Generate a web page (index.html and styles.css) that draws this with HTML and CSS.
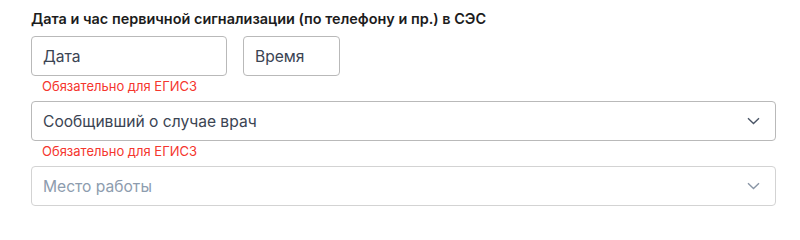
FILE: index.html
```html
<!DOCTYPE html>
<html lang="ru">
<head>
<meta charset="utf-8">
<link rel="stylesheet" href="styles.css">
</head>
<body>
<div class="form">
  <div class="title">Дата и час первичной сигнализации (по телефону и пр.) в СЭС</div>
  <div class="row">
    <div class="field date">Дата</div>
    <div class="field time">Время</div>
  </div>
  <div class="error">Обязательно для ЕГИСЗ</div>
  <div class="field select">
    <span>Сообщивший о случае врач</span>
    <svg class="chev" width="13" height="8" viewBox="0 0 13 8"><path d="M1 1.2l5.5 5.3 5.5-5.3" fill="none" stroke="#4a5566" stroke-width="1.4"/></svg>
  </div>
  <div class="error">Обязательно для ЕГИСЗ</div>
  <div class="field select muted">
    <span>Место работы</span>
    <svg class="chev" width="13" height="8" viewBox="0 0 13 8"><path d="M1 1.2l5.5 5.3 5.5-5.3" fill="none" stroke="#8a96a6" stroke-width="1.4"/></svg>
  </div>
</div>
</body>
</html>
```
FILE: styles.css
```css
html, body { margin: 0; background: #fff; }
body { font-family: Inter, "Noto Sans", sans-serif; }
.form { padding: 9px 24px 0 31px; width: 745px; }
.title { font-size: 14.45px; font-weight: 600; color: #1c1c1c; line-height: 20px; height: 27px; }
.row { display: flex; gap: 16px; }
.field {
  box-sizing: border-box; height: 40px; border: 1px solid #b9b9b9; border-radius: 4px;
  display: flex; align-items: center; padding: 0 11px; font-size: 15.6px; color: #3b4453;
}
.date { width: 196px; }
.time { width: 97px; }
.error { font-size: 13px; color: #f5362e; padding-left: 11px; line-height: 15px; margin: 3px 0 7px; }
.select { justify-content: space-between; width: 745px; padding-right: 15px; }
.muted { border-color: #d3d3d3; color: #8d9cae; }
.chev { display: block; }
```
